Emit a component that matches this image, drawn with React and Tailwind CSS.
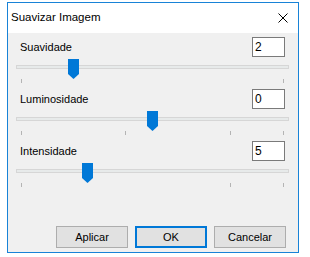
import React from "react";

const font = { fontFamily: '"Liberation Sans", Arial, sans-serif' };

function Thumb() {
  return (
    <svg width="11" height="20" viewBox="0 0 11 20" className="block">
      <path d="M0 0 H11 V15 L5.5 20 L0 15 Z" fill="#0078d7" />
    </svg>
  );
}

function Slider({ thumbLeft, ticks }) {
  return (
    <div className="relative ml-[8px] w-[273px] h-[25px]">
      <div className="absolute left-0 right-0 top-[6px] h-[4px] border border-[#d6d6d6] bg-[#e7eaea]" />
      <div className="absolute top-0" style={{ left: thumbLeft }}>
        <Thumb />
      </div>
      {ticks.map((t) => (
        <div
          key={t}
          className="absolute top-[20px] w-px h-[4px] bg-[#b4b4b4]"
          style={{ left: t }}
        />
      ))}
    </div>
  );
}

function Group({ label, value, thumbLeft, ticks }) {
  return (
    <div className="flex flex-col">
      <div className="flex items-center justify-between pl-[12px] pr-[13px] h-[20px]">
        <span className="text-[11px] text-black">{label}</span>
        <div className="w-[33px] h-[20px] border border-[#7a7a7a] bg-white pl-[2px] text-[12px] leading-[18px] text-black">
          {value}
        </div>
      </div>
      <div className="h-[2px]" />
      <Slider thumbLeft={thumbLeft} ticks={ticks} />
      <div className="h-[5px]" />
    </div>
  );
}

function Button({ children, primary }) {
  return (
    <button
      className={`w-[72px] h-[22px] bg-[#e1e1e1] text-[11px] text-black ${
        primary ? "border-2 border-[#0078d7]" : "border border-[#adadad]"
      }`}
    >
      {children}
    </button>
  );
}

export default function App() {
  const groups = [
    { label: "Suavidade", value: "2", thumbLeft: 52, ticks: [5, 267] },
    { label: "Luminosidade", value: "0", thumbLeft: 131, ticks: [5, 109, 214, 267] },
    { label: "Intensidade", value: "5", thumbLeft: 66, ticks: [5, 214, 267] },
  ];

  return (
    <div className="w-[310px] h-[257px] bg-white pt-[2px] pl-[7px]" style={font}>
      <div className="w-[292px] h-[251px] border border-[#1883d7] flex flex-col">
        <div className="h-[30px] bg-white flex items-center justify-between pl-[3px] pr-[10px]">
          <span className="text-[11.5px] text-black">Suavizar Imagem</span>
          <svg width="10" height="10" viewBox="0 0 10 10">
            <path d="M0.5 0.5 L9.5 9.5 M9.5 0.5 L0.5 9.5" stroke="#000" strokeWidth="1" />
          </svg>
        </div>
        <div className="flex-1 bg-[#f0f0f0] flex flex-col pt-[4px] pb-[4px]">
          {groups.map((g) => (
            <Group key={g.label} {...g} />
          ))}
          <div className="mt-auto flex justify-end gap-[7px] pr-[12px]">
            <Button>Aplicar</Button>
            <Button primary>OK</Button>
            <Button>Cancelar</Button>
          </div>
        </div>
      </div>
    </div>
  );
}
